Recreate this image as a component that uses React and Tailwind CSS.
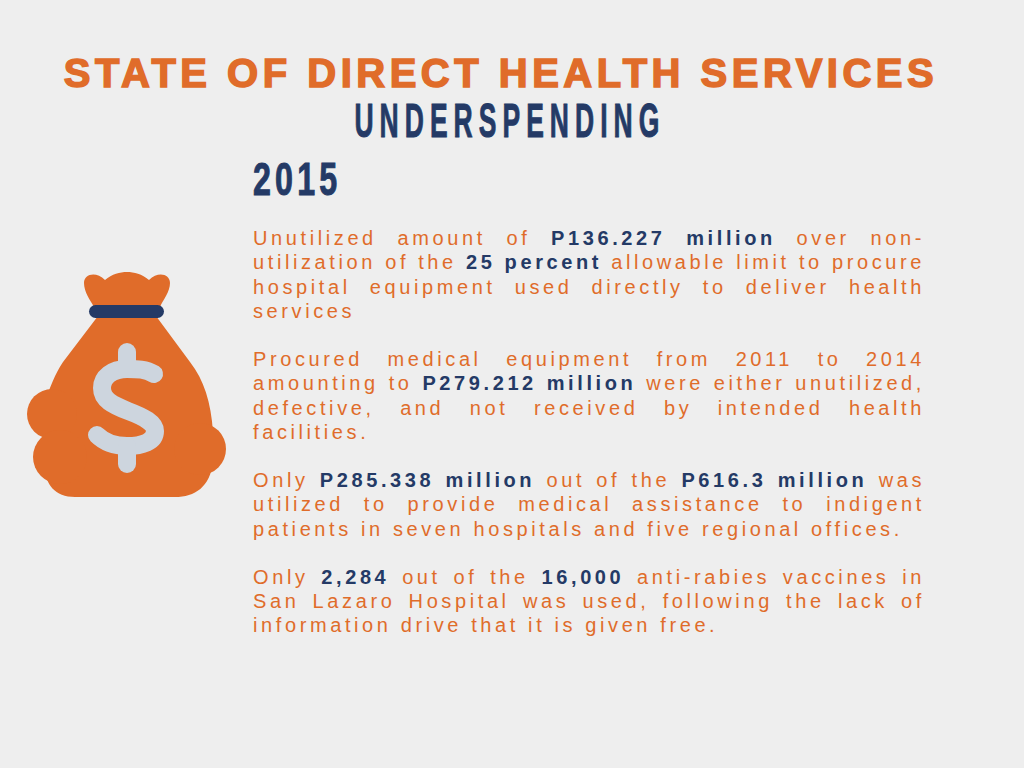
import React from 'react';

const MoneyBag = () => (
  <svg width="220" height="250" viewBox="20 260 220 250" className="block">
    {/* knot */}
    <path
      d="M84,281 C84,272 96,269 105,278 C112,272 120,270 127,270 C134,270 142,272 149,278 C158,269 170,272 170,281 C170,290 163,298 160,305 L94,305 C90,298 84,290 84,281 Z"
      fill="#e06c2a"
    />
    {/* bag body */}
    <path
      d="M98,314 L156,314 L190,360 C204,378 211,400 213,430 L213,460 C210,485 195,495 175,495 L75,495 C55,495 45,482 45,465 L45,400 C50,385 55,372 63,360 Z"
      fill="#e06c2a"
    />
    <circle cx="52" cy="412" r="25" fill="#e06c2a" />
    <circle cx="60" cy="455" r="27" fill="#e06c2a" />
    <circle cx="200" cy="447" r="26" fill="#e06c2a" />
    {/* band */}
    <rect x="89" y="303" width="75" height="13" rx="6.5" fill="#243a66" />
    {/* dollar sign */}
    <g fill="none" stroke="#cdd5de" strokeWidth="18" strokeLinecap="round">
      <path d="M154,372 C146,367 137,367 127,367 C112,367 102,375 102,386 C102,398 113,403 128,409 C144,415 155,421 155,429 C155,440 142,444 127,444 C114,444 104,440 97,433" />
      <path d="M127,350 L127,367" />
      <path d="M127,444 L127,462" />
    </g>
  </svg>
);

const B = ({ children }) => (
  <span className="font-bold text-[#243a66]">{children}</span>
);

const paragraphs = [
  <>
    Unutilized amount of <B>P136.227 million</B> over non-utilization of the <B>25 percent</B> allowable limit to procure
    hospital equipment used directly to deliver health services
  </>,
  <>
    Procured medical equipment from 2011 to 2014 amounting to <B>P279.212 million</B> were either unutilized, defective,
    and not received by intended health facilities.
  </>,
  <>
    Only <B>P285.338 million</B> out of the <B>P616.3 million</B> was utilized to provide medical assistance to indigent
    patients in seven hospitals and five regional offices.
  </>,
  <>
    Only <B>2,284</B> out of the <B>16,000</B> anti-rabies vaccines in San Lazaro Hospital was used, following the lack of
    information drive that it is given free.
  </>,
];

export default function App() {
  return (
    <div className="min-h-screen w-full bg-[#eeeeee] font-['Liberation_Sans',Arial,sans-serif] overflow-hidden">
      {/* Titles */}
      <div className="pt-[53px] pr-[22px] text-center">
        <h1 className="text-[40px] leading-[40px] font-bold tracking-[4.5px] text-[#e06c2a] [-webkit-text-stroke:1.5px_#e06c2a]">
          STATE OF DIRECT HEALTH SERVICES
        </h1>
      </div>
      <div className="pr-[4px] pt-[3px] text-center">
        <h2 className="inline-block origin-center scale-x-[0.54] text-[49px] leading-[49px] font-bold tracking-[11.2px] text-[#243a66] [-webkit-text-stroke:1px_#243a66]">
          UNDERSPENDING
        </h2>
      </div>

      {/* Body */}
      <div className="flex">
        <div className="w-[253px] shrink-0 pl-[20px] pt-[117px]">
          <MoneyBag />
        </div>
        <div className="w-[672px] shrink-0">
          <div className="pt-[11px] origin-left scale-x-[0.7] text-[46px] leading-[46px] font-bold tracking-[6px] text-[#243a66] [-webkit-text-stroke:1px_#243a66]">
            2015
          </div>
          <div className="mt-[24px] flex flex-col gap-[24px]">
            {paragraphs.map((p, i) => (
              <p
                key={i}
                className="text-[20px] leading-[24.25px] tracking-[3.6px] text-[#e06c2a] text-justify [text-align-last:left]"
              >
                {p}
              </p>
            ))}
          </div>
        </div>
      </div>
    </div>
  );
}
